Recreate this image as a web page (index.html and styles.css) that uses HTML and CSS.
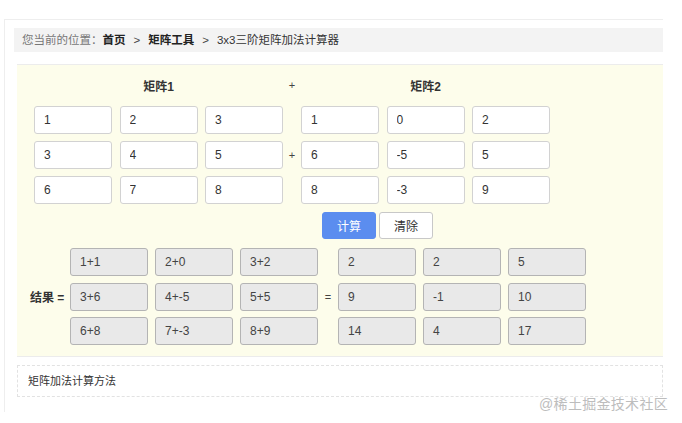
FILE: index.html
```html
<!DOCTYPE html>
<html lang="zh-CN">
<head>
<meta charset="utf-8">
<title>3x3三阶矩阵加法计算器</title>
<link rel="stylesheet" href="styles.css">
</head>
<body>
<div class="page">
  <div class="crumb">
    <span class="crumb-lead">您当前的位置：</span><a class="crumb-link">首页</a><span class="sep">&gt;</span><a class="crumb-link">矩阵工具</a><span class="sep">&gt;</span><span class="crumb-cur">3x3三阶矩阵加法计算器</span>
  </div>

  <div class="panel">
    <div class="row head-row">
      <div class="group title">矩阵1</div>
      <div class="op">+</div>
      <div class="group title">矩阵2</div>
    </div>

    <div class="matrix">
      <div class="row">
        <div class="group"><input class="cell" value="1"><input class="cell" value="2"><input class="cell" value="3"></div>
        <div class="op"></div>
        <div class="group"><input class="cell" value="1"><input class="cell" value="0"><input class="cell" value="2"></div>
      </div>
      <div class="row">
        <div class="group"><input class="cell" value="3"><input class="cell" value="4"><input class="cell" value="5"></div>
        <div class="op">+</div>
        <div class="group"><input class="cell" value="6"><input class="cell" value="-5"><input class="cell" value="5"></div>
      </div>
      <div class="row">
        <div class="group"><input class="cell" value="6"><input class="cell" value="7"><input class="cell" value="8"></div>
        <div class="op"></div>
        <div class="group"><input class="cell" value="8"><input class="cell" value="-3"><input class="cell" value="9"></div>
      </div>
    </div>

    <div class="actions">
      <button class="btn btn-primary">计算</button>
      <button class="btn">清除</button>
    </div>

    <div class="result">
      <div class="result-label">结果 =</div>
      <div class="result-rows">
        <div class="rrow">
          <div class="rgroup"><div class="rcell">1+1</div><div class="rcell">2+0</div><div class="rcell">3+2</div></div>
          <div class="rop"></div>
          <div class="rgroup"><div class="rcell">2</div><div class="rcell">2</div><div class="rcell">5</div></div>
        </div>
        <div class="rrow">
          <div class="rgroup"><div class="rcell">3+6</div><div class="rcell">4+-5</div><div class="rcell">5+5</div></div>
          <div class="rop">=</div>
          <div class="rgroup"><div class="rcell">9</div><div class="rcell">-1</div><div class="rcell">10</div></div>
        </div>
        <div class="rrow">
          <div class="rgroup"><div class="rcell">6+8</div><div class="rcell">7+-3</div><div class="rcell">8+9</div></div>
          <div class="rop"></div>
          <div class="rgroup"><div class="rcell">14</div><div class="rcell">4</div><div class="rcell">17</div></div>
        </div>
      </div>
    </div>
  </div>

  <div class="method">矩阵加法计算方法</div>
</div>
<div class="watermark">@稀土掘金技术社区</div>
</body>
</html>
```

FILE: styles.css
```css
html, body {
  margin: 0;
  padding: 0;
  background: #fff;
}
body {
  font-family: "Liberation Sans", "Noto Sans CJK SC", sans-serif;
  color: #333;
  font-size: 12px;
  position: relative;
  width: 682px;
  height: 423px;
  overflow: hidden;
}
.page {
  box-sizing: border-box;
  margin: 19px 0 0 4px;
  width: 659px;
  height: 393px;
  border-top: 1px solid #eeeeee;
  border-left: 1px solid #eeeeee;
  padding: 8px 0 0 9px;
}
.crumb {
  height: 24px;
  line-height: 24px;
  background: #f3f3f3;
  padding-left: 8px;
  font-size: 11.5px;
  color: #333;
  white-space: nowrap;
}
.crumb-lead { color: #777; }
.crumb-link { font-weight: bold; color: #222; }
.sep { margin: 0 8px; color: #444; }
.crumb-cur { color: #333; }

.panel {
  margin: 12px 0 0 3px;
  height: 293px;
  box-sizing: border-box;
  background: #fdfdeb;
  border-top: 1px solid #ececec;
  border-bottom: 1px solid #ececec;
  padding: 10px 0 0 17px;
}
.row {
  display: flex;
  align-items: center;
}
.group {
  display: flex;
  gap: 7.5px;
  width: 249px;
}
.op {
  width: 18px;
  text-align: center;
  font-size: 11px;
  color: #444;
}
.head-row {
  height: 20px;
}
.title {
  justify-content: center;
  font-weight: bold;
  color: #333;
}
.matrix {
  margin-top: 11px;
  display: flex;
  flex-direction: column;
  gap: 7px;
}
.cell {
  box-sizing: border-box;
  width: 78px;
  height: 28px;
  margin: 0;
  border: 1px solid #d2d2d2;
  border-radius: 3px;
  background: #fff;
  padding: 0 0 0 9px;
  font-family: "Liberation Sans", "Noto Sans CJK SC", sans-serif;
  font-size: 12px;
  color: #333;
}
.actions {
  display: flex;
  gap: 3px;
  margin-top: 8px;
  padding-left: 288px;
}
.btn {
  box-sizing: border-box;
  width: 54px;
  height: 27px;
  border: 1px solid #c8c8c8;
  border-radius: 3px;
  background: #fff;
  font-family: "Liberation Sans", "Noto Sans CJK SC", sans-serif;
  font-size: 12px;
  color: #333;
  padding: 0;
}
.btn-primary {
  background: #5b8def;
  border-color: #5b8def;
  color: #fff;
}
.result {
  display: flex;
  align-items: center;
  margin: 9px 0 0 -17px;
}
.result-label {
  width: 53px;
  box-sizing: border-box;
  padding-left: 13px;
  font-weight: bold;
  color: #333;
  white-space: nowrap;
}
.result-rows {
  display: flex;
  flex-direction: column;
  gap: 6.5px;
}
.rrow {
  display: flex;
  align-items: center;
}
.rgroup {
  display: flex;
  gap: 7px;
}
.rop {
  width: 20px;
  text-align: center;
  font-size: 11px;
  color: #444;
}
.rcell {
  box-sizing: border-box;
  width: 78px;
  height: 28px;
  line-height: 26px;
  border: 1px solid #b4b4b4;
  border-radius: 3px;
  background: #e9e9e9;
  padding-left: 9px;
  color: #444;
}
.method {
  margin: 8px 0 0 3px;
  height: 32px;
  box-sizing: border-box;
  border: 1px dashed #e2e2e2;
  line-height: 30px;
  padding-left: 10px;
  font-size: 11px;
  color: #333;
}
.watermark {
  position: absolute;
  right: 14px;
  top: 393px;
  font-size: 14px;
  color: #bdbdbd;
  white-space: nowrap;
  letter-spacing: 0.3px;
}
```
